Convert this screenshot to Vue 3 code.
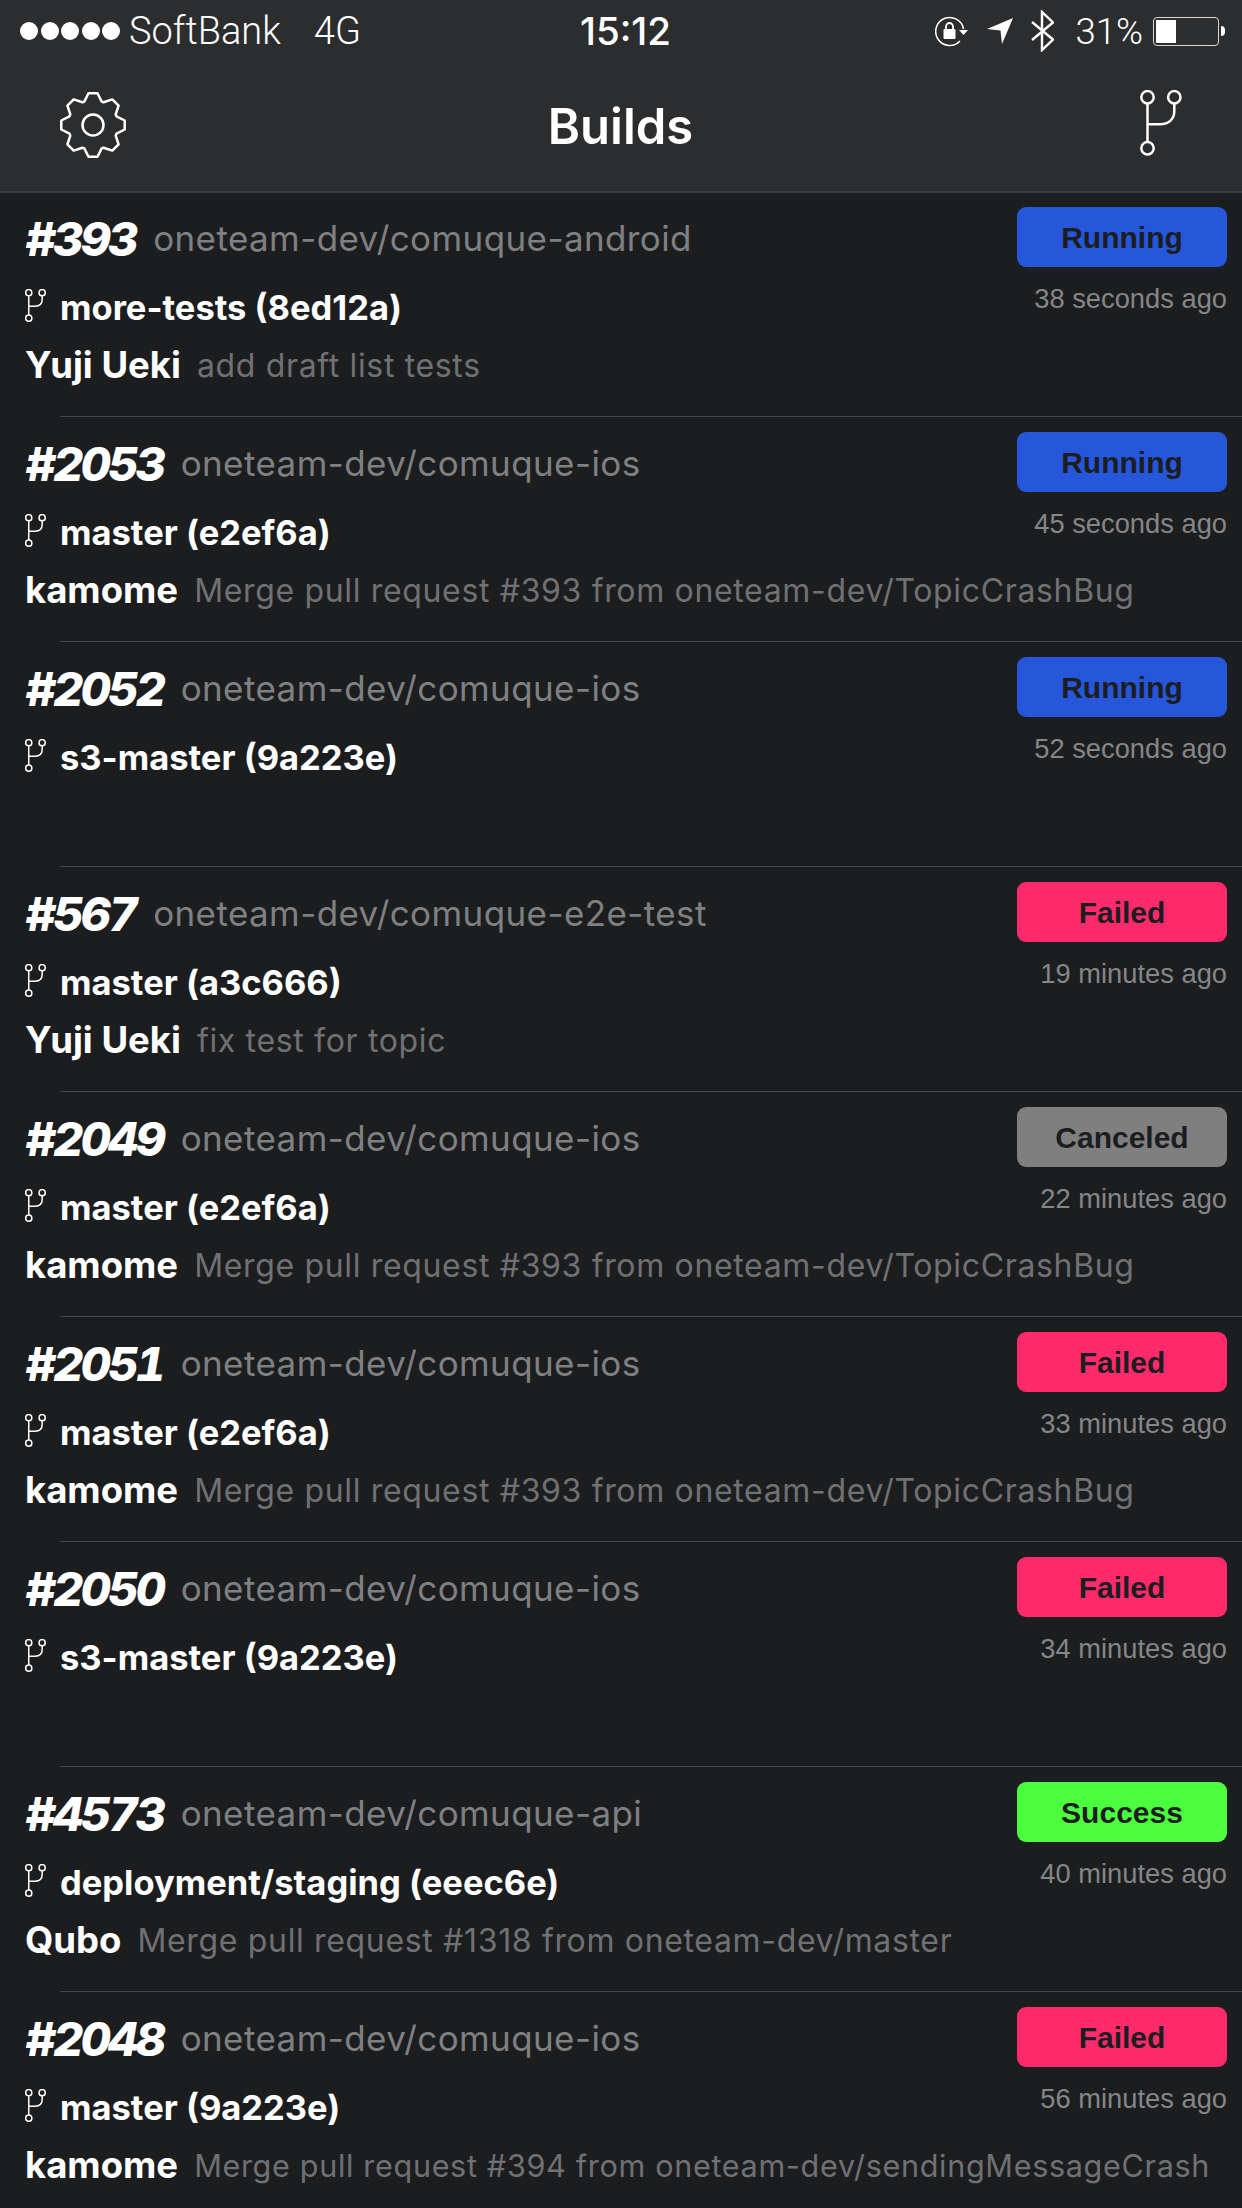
<script setup>
// 빌드 목록 데이터
const builds = [
  { num: '#393', repo: 'oneteam-dev/comuque-android', branch: 'more-tests (8ed12a)', author: 'Yuji Ueki', msg: 'add draft list tests', status: 'Running', time: '38 seconds ago' },
  { num: '#2053', repo: 'oneteam-dev/comuque-ios', branch: 'master (e2ef6a)', author: 'kamome', msg: 'Merge pull request #393 from oneteam-dev/TopicCrashBug', status: 'Running', time: '45 seconds ago' },
  { num: '#2052', repo: 'oneteam-dev/comuque-ios', branch: 's3-master (9a223e)', author: '', msg: '', status: 'Running', time: '52 seconds ago' },
  { num: '#567', repo: 'oneteam-dev/comuque-e2e-test', branch: 'master (a3c666)', author: 'Yuji Ueki', msg: 'fix test for topic', status: 'Failed', time: '19 minutes ago' },
  { num: '#2049', repo: 'oneteam-dev/comuque-ios', branch: 'master (e2ef6a)', author: 'kamome', msg: 'Merge pull request #393 from oneteam-dev/TopicCrashBug', status: 'Canceled', time: '22 minutes ago' },
  { num: '#2051', repo: 'oneteam-dev/comuque-ios', branch: 'master (e2ef6a)', author: 'kamome', msg: 'Merge pull request #393 from oneteam-dev/TopicCrashBug', status: 'Failed', time: '33 minutes ago' },
  { num: '#2050', repo: 'oneteam-dev/comuque-ios', branch: 's3-master (9a223e)', author: '', msg: '', status: 'Failed', time: '34 minutes ago' },
  { num: '#4573', repo: 'oneteam-dev/comuque-api', branch: 'deployment/staging (eeec6e)', author: 'Qubo', msg: 'Merge pull request #1318 from oneteam-dev/master', status: 'Success', time: '40 minutes ago' },
  { num: '#2048', repo: 'oneteam-dev/comuque-ios', branch: 'master (9a223e)', author: 'kamome', msg: 'Merge pull request #394 from oneteam-dev/sendingMessageCrash', status: 'Failed', time: '56 minutes ago' }
]

// 톱니바퀴 아이콘 경로 (이빨 8개)
function gearPath() {
  const cx = 34
  const cy = 34
  const pts = []
  for (let i = 0; i < 8; i++) {
    const a = (i * Math.PI) / 4 - Math.PI / 2
    const at = (r, d) => {
      const t = a + (d * Math.PI) / 180
      return (cx + r * Math.cos(t)).toFixed(1) + ' ' + (cy + r * Math.sin(t)).toFixed(1)
    }
    pts.push(at(25, -20), at(32, -8), at(32, 8), at(25, 20))
  }
  return 'M' + pts.join('L') + 'Z'
}
const gear = gearPath()
</script>

<template>
  <div class="screen">
    <header class="top">
      <div class="status">
        <div class="status-left">
          <span class="dots"><i v-for="n in 5" :key="n"></i></span>
          <span class="carrier">SoftBank</span>
          <span class="net">4G</span>
        </div>
        <div class="clock">15:12</div>
        <div class="status-right">
          <svg class="ic-lock" width="36" height="32" viewBox="0 0 36 32">
            <path d="M28.500 14A14 14 0 1 0 25 26" fill="none" stroke="#fff" stroke-width="1.500" />
            <path d="M24 15h9l-4.500 5z" fill="#fff" />
            <rect x="8.500" y="14" width="12" height="10" rx="1" fill="#fff" />
            <path d="M11 14v-2.500a3.500 3.500 0 0 1 7 0v2.500" fill="none" stroke="#fff" stroke-width="1.800" />
          </svg>
          <svg class="ic-loc" width="26" height="26" viewBox="0 0 26 26">
            <path d="M0 11L26 0L15 26L13.500 12.500z" fill="#fff" />
          </svg>
          <svg class="ic-bt" width="23" height="42" viewBox="0 0 23 42">
            <path d="M1 12L22 29.500L11 40V2L22 12.500L1 30" fill="none" stroke="#fff" stroke-width="2.400" />
          </svg>
          <span class="pct">31%</span>
          <div class="battery"><div class="battery-fill"></div></div>
          <div class="battery-tip"></div>
        </div>
      </div>
      <nav class="nav">
        <svg class="gear" width="68" height="68" viewBox="0 0 68 68">
          <path :d="gear" fill="none" stroke="#fff" stroke-width="2.500" stroke-linejoin="round" />
          <circle cx="34" cy="34" r="10.500" fill="none" stroke="#fff" stroke-width="2.500" />
        </svg>
        <h1 class="title">Builds</h1>
        <svg class="branch-big" width="42" height="66" viewBox="0 0 42 66">
          <path d="M7.500 13.500V52M7.500 34.300H20C29 34.300 34.300 29 34.300 21V13.500" fill="none" stroke="#fff" stroke-width="2.500" />
          <circle cx="7.500" cy="7.300" r="6.200" fill="none" stroke="#fff" stroke-width="2.500" />
          <circle cx="34.300" cy="7.300" r="6.200" fill="none" stroke="#fff" stroke-width="2.500" />
          <circle cx="7.500" cy="58.300" r="6.200" fill="none" stroke="#fff" stroke-width="2.500" />
        </svg>
      </nav>
    </header>

    <ul class="list">
      <li v-for="b in builds" :key="b.num" class="row">
        <div class="line1">
          <span class="num">{{ b.num }}</span>
          <span class="repo">{{ b.repo }}</span>
        </div>
        <div class="line2">
          <svg class="branch-small" width="21" height="33" viewBox="0 0 42 66">
            <path d="M7.500 13.500V52M7.500 34.300H20C29 34.300 34.300 29 34.300 21V13.500" fill="none" stroke="#fff" stroke-width="3" />
            <circle cx="7.500" cy="7.300" r="6.200" fill="none" stroke="#fff" stroke-width="3" />
            <circle cx="34.300" cy="7.300" r="6.200" fill="none" stroke="#fff" stroke-width="3" />
            <circle cx="7.500" cy="58.300" r="6.200" fill="none" stroke="#fff" stroke-width="3" />
          </svg>
          <span class="branch">{{ b.branch }}</span>
        </div>
        <div class="line3">
          <span class="author">{{ b.author }}</span>
          <span class="msg" :class="{ long: b.msg.length > 55 }">{{ b.msg }}</span>
        </div>
        <div class="side">
          <div class="badge" :class="b.status.toLowerCase()">{{ b.status }}</div>
          <div class="time">{{ b.time }}</div>
        </div>
      </li>
    </ul>
  </div>
</template>

<style>
html,
body {
  margin: 0;
  background: #1c1d1f;
}
</style>

<style scoped>
.screen {
  width: 1242px;
  height: 2208px;
  overflow: hidden;
  background: #1c1d1f;
  font-family: Inter, "Liberation Sans", sans-serif;
  color: #fff;
}

.top {
  height: 191px;
  background: #2c2d2f;
  border-bottom: 2px solid #3c3d3f;
}

.status {
  height: 62px;
  display: grid;
  grid-template-columns: 1fr auto 1fr;
  align-items: center;
  padding: 0 17px 0 20px;
}

.status-left,
.status-right {
  display: flex;
  align-items: center;
}

.status-right {
  justify-content: flex-end;
}

.dots {
  display: flex;
  gap: 2.5px;
  margin-right: 9px;
}

.dots i {
  width: 18px;
  height: 18px;
  border-radius: 50%;
  background: #fff;
}

.carrier,
.net,
.pct {
  font-family: Roboto, sans-serif;
  font-weight: 300;
  font-size: 38px;
}

.net {
  margin-left: 33px;
}

.clock {
  margin-left: 6px;
  font-size: 38.500px;
  font-weight: 500;
}

.ic-loc {
  margin-left: 16px;
}

.ic-bt {
  margin-left: 18px;
}

.pct {
  margin-left: 22px;
  font-size: 36.500px;
}

.battery {
  width: 66px;
  height: 29px;
  box-sizing: border-box;
  margin-left: 10px;
  border: 1px solid #d8d8d8;
  border-radius: 4px;
  padding: 2px;
}

.battery-fill {
  width: 20px;
  height: 100%;
  background: #fff;
}

.battery-tip {
  width: 4px;
  height: 10px;
  margin-left: 2px;
  background: #fff;
  border-radius: 0 4px 4px 0;
}

.nav {
  height: 129px;
  display: grid;
  grid-template-columns: 1fr auto 1fr;
  padding: 0 60px 0 59px;
}

.gear {
  margin-top: 29px;
}

.title {
  margin: 0;
  align-self: center;
  font-size: 49px;
  font-weight: 600;
}

.branch-big {
  justify-self: end;
  margin-top: 28px;
}

.list {
  list-style: none;
  margin: 0;
  padding: 0;
}

.row {
  position: relative;
  height: 225px;
  box-sizing: border-box;
  padding: 13px 0 0 25px;
}

/* 구분선은 왼쪽 60px 들여쓰기 */
.row::after {
  content: "";
  position: absolute;
  left: 60px;
  right: 0;
  bottom: 1px;
  height: 1px;
  background: #47484a;
}

.line1 {
  height: 64px;
  display: flex;
  align-items: center;
}

.num {
  font-size: 47px;
  font-weight: 800;
  font-style: italic;
  font-variant-numeric: tabular-nums;
  letter-spacing: -2.800px;
}

.repo {
  margin-left: 17.500px;
  font-size: 35px;
  color: #7f8082;
  letter-spacing: 0.4px;
}

.line2 {
  height: 58px;
  margin-top: 8px;
  display: flex;
  align-items: center;
}

.branch-small {
  margin-right: 14px;
  margin-top: -3px;
}

.branch {
  font-size: 34.500px;
  font-weight: 650;
}

.line3 {
  height: 58px;
  display: flex;
  align-items: center;
}

.author {
  font-size: 36.500px;
  font-weight: 650;
}

.msg {
  margin-left: 16px;
  font-size: 32px;
  color: #707173;
  letter-spacing: 0.66px;
  white-space: nowrap;
}

/* 긴 메시지는 폭에 맞춰 글자를 줄인다 */
.msg.long {
  font-size: 30.600px;
}

.side {
  position: absolute;
  top: 14px;
  right: 15px;
  display: flex;
  flex-direction: column;
  align-items: flex-end;
}

.badge {
  width: 210px;
  height: 60px;
  line-height: 62px;
  border-radius: 9px;
  text-align: center;
  font-family: "Liberation Sans", sans-serif;
  font-size: 30px;
  font-weight: 700;
  color: #1c1d1f;
}

.running {
  background: #2656d9;
}

.failed {
  background: #ff2a6c;
}

.canceled {
  background: #7f7f7f;
}

.success {
  background: #4cff3e;
}

.time {
  margin-top: 16px;
  font-family: "Liberation Sans", sans-serif;
  font-size: 27.300px;
  color: #858688;
}
</style>
